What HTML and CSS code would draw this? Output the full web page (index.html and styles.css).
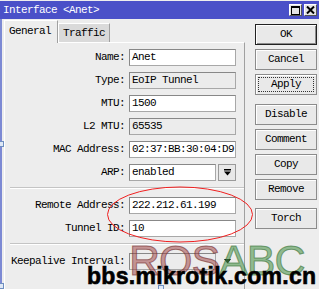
FILE: index.html
```html
<!DOCTYPE html>
<html lang="en">
<head>
    <meta charset="UTF-8">
    <title>Interface &lt;Anet&gt;</title>
    <link rel="stylesheet" href="styles.css">
</head>
<body>
    <div class="window">
        <div class="titlebar">
            <span class="title">Interface &lt;Anet&gt;</span>
            <div class="tb-btns">
                <span class="tb-btn"><span class="max-box"></span></span>
                <span class="tb-btn">
                    <svg width="9" height="8" viewBox="0 0 9 8"><path d="M1 0.5 L8 7.5 M8 0.5 L1 7.5" stroke="#000" stroke-width="2"/></svg>
                </span>
            </div>
        </div>

        <div class="body">
            <div class="main">
                <div class="tabs">
                    <div class="tab active">General</div>
                    <div class="tab">Traffic</div>
                </div>
                <div class="panel">
                    <div class="row"><div class="label">Name:</div><div class="field">Anet</div></div>
                    <div class="row"><div class="label">Type:</div><div class="field ro">EoIP Tunnel</div></div>
                    <div class="row"><div class="label">MTU:</div><div class="field">1500</div></div>
                    <div class="row"><div class="label">L2 MTU:</div><div class="field ro">65535</div></div>
                    <div class="row"><div class="label">MAC Address:</div><div class="field">02:37:BB:30:04:D9</div></div>
                    <div class="row">
                        <div class="label">ARP:</div>
                        <div class="field short">enabled</div>
                        <div class="drop">
                            <svg width="7" height="7" viewBox="0 0 7 7"><rect x="0" y="0" width="7" height="1.5" fill="#000"/><path d="M0 2.5 H7 L3.5 6.5 Z" fill="#000"/></svg>
                        </div>
                    </div>
                    <div class="sep"></div>
                    <div class="row"><div class="label">Remote Address:</div><div class="field">222.212.61.199</div></div>
                    <div class="row"><div class="label">Tunnel ID:</div><div class="field">10</div></div>
                    <div class="sep"></div>
                    <div class="row">
                        <div class="label">Keepalive Interval:</div>
                        <div class="field short ro"></div>
                        <div class="drop plain">
                            <svg width="7" height="5" viewBox="0 0 7 5"><path d="M0 0 H7 L3.5 4.5 Z" fill="#000"/></svg>
                        </div>
                    </div>
                </div>
            </div>

            <div class="side">
                <div class="btn default">OK</div>
                <div class="btn">Cancel</div>
                <div class="btn focus"><span>Apply</span></div>
                <div class="btn group">Disable</div>
                <div class="btn">Comment</div>
                <div class="btn">Copy</div>
                <div class="btn">Remove</div>
                <div class="btn group2">Torch</div>
            </div>
        </div>

        <svg class="ring" width="319" height="289" viewBox="0 0 319 289">
            <ellipse cx="180" cy="214.5" rx="72.5" ry="27.5" fill="none" stroke="#f02020" stroke-width="1"/>
        </svg>

        <div class="mark"><span class="ros">ROS</span><span class="abc">ABC</span></div>
        <div class="url">bbs.mikrotik.com.cn</div>

        <span class="handle h1"></span>
        <span class="handle h2"></span>
        <span class="handle h3"></span>
    </div>
</body>
</html>
```

FILE: styles.css
```css
body {
    margin: 0;
    font-family: "Liberation Mono", "DejaVu Sans Mono", monospace;
    font-size: 11px;
    letter-spacing: -0.6px;
    color: #000;
    background: #fff;
}
.window {
    position: relative;
    width: 319px;
    height: 289px;
    overflow: hidden;
    background: #ededed;
}
.titlebar {
    height: 18px;
    margin-top: 1px;
    background: #4a50c8;
    color: #fff;
    display: flex;
    align-items: center;
    justify-content: space-between;
    padding: 0 2px 0 3px;
}
.title {
    font-size: 11px;
}
.tb-btns {
    display: flex;
    gap: 2px;
}
.tb-btn {
    width: 13px;
    height: 12px;
    box-sizing: border-box;
    background: #e4e4e4;
    border: 1px solid #fff;
    border-right-color: #555;
    border-bottom-color: #555;
    display: flex;
    align-items: center;
    justify-content: center;
}
.max-box {
    width: 7px;
    height: 6px;
    border: 1px solid #000;
    border-top-width: 2px;
}
.body {
    display: flex;
    height: 270px;
    border-left: 2px solid #7d8ad4;
    padding-left: 2px;
}
.main {
    width: 241px;
    display: flex;
    flex-direction: column;
}
.tabs {
    display: flex;
    align-items: flex-end;
    height: 23px;
}
.tab {
    height: 19px;
    line-height: 18px;
    width: 52px;
    box-sizing: border-box;
    padding-left: 4px;
    background: #dadada;
    border: 1px solid #fff;
    border-right-color: #a0a0a0;
    border-bottom: none;
}
.tab.active {
    height: 23px;
    width: 54px;
    line-height: 20px;
    background: #ededed;
    margin-bottom: -1px;
    position: relative;
    z-index: 1;
}
.panel {
    flex: 1;
    border: 1px solid #fff;
    border-right-color: #a0a0a0;
    border-bottom: none;
    padding-top: 6px;
}
.row {
    display: flex;
    height: 17px;
    margin-bottom: 6px;
}
.label {
    width: 120px;
    margin-right: 4px;
    text-align: right;
    line-height: 17px;
    white-space: nowrap;
}
.field {
    width: 107px;
    height: 17px;
    box-sizing: border-box;
    border: 1px solid #a8a8a8;
    border-top-color: #888;
    border-left-color: #888;
    background: #fff;
    padding-left: 2px;
    line-height: 15px;
    white-space: nowrap;
    overflow: hidden;
}
.field.ro {
    background: #ececec;
}
.field.short {
    width: 87px;
}
.drop {
    width: 18px;
    height: 17px;
    margin-left: 2px;
    box-sizing: border-box;
    border: 1px solid #9a9a9a;
    background: #e8e8e8;
    display: flex;
    align-items: center;
    justify-content: center;
}
.drop.plain {
    border-color: transparent;
    background: transparent;
}
.sep {
    height: 0;
    border-top: 1px solid #c4c4c4;
    border-bottom: 1px solid #fff;
    margin: 0 0 8px 5px;
}
.side {
    width: 62px;
    margin-left: 10px;
    padding-top: 5px;
    display: flex;
    flex-direction: column;
    gap: 4px;
}
.btn {
    height: 21px;
    box-sizing: border-box;
    border: 1px solid #8c8c8c;
    box-shadow: inset 1px 1px 0 #fff;
    background: #e9e9e9;
    text-align: center;
    line-height: 19px;
}
.btn.default {
    border: 1px solid #222;
    box-shadow: inset 1px 1px 0 #fff, inset -1px -1px 0 #8c8c8c;
}
.btn.focus {
    padding: 2px;
    line-height: 15px;
}
.btn.focus span {
    display: block;
    height: 15px;
    border: 1px dotted #333;
    box-sizing: border-box;
    line-height: 13px;
}
.btn.group {
    margin-top: 5px;
}
.btn.group2 {
    margin-top: 4px;
}
.ring {
    position: absolute;
    left: 0;
    top: 0;
    pointer-events: none;
}
.mark {
    position: absolute;
    left: 129px;
    top: 236px;
    font-family: "Liberation Sans", Arial, sans-serif;
    font-size: 43px;
    letter-spacing: -1px;
    line-height: 48px;
}
.ros {
    color: rgba(160, 70, 70, 0.55);
    -webkit-text-stroke: 1px rgba(110, 40, 40, 0.6);
}
.abc {
    color: rgba(80, 150, 80, 0.6);
    -webkit-text-stroke: 1px rgba(50, 110, 50, 0.6);
}
.url {
    position: absolute;
    left: 87px;
    top: 263px;
    font-family: "Liberation Sans", Arial, sans-serif;
    font-weight: bold;
    font-size: 23px;
    letter-spacing: 0.3px;
    line-height: 26px;
    color: #000;
    -webkit-text-stroke: 0.6px #000;
}
.handle {
    position: absolute;
    width: 4px;
    height: 4px;
    border: 1px solid #6f8fc0;
    background: #dfe8f6;
}
.h1 { left: -2px; top: 141px; }
.h2 { left: -2px; top: 283px; }
.h3 { left: 158px; top: 285px; }
```
